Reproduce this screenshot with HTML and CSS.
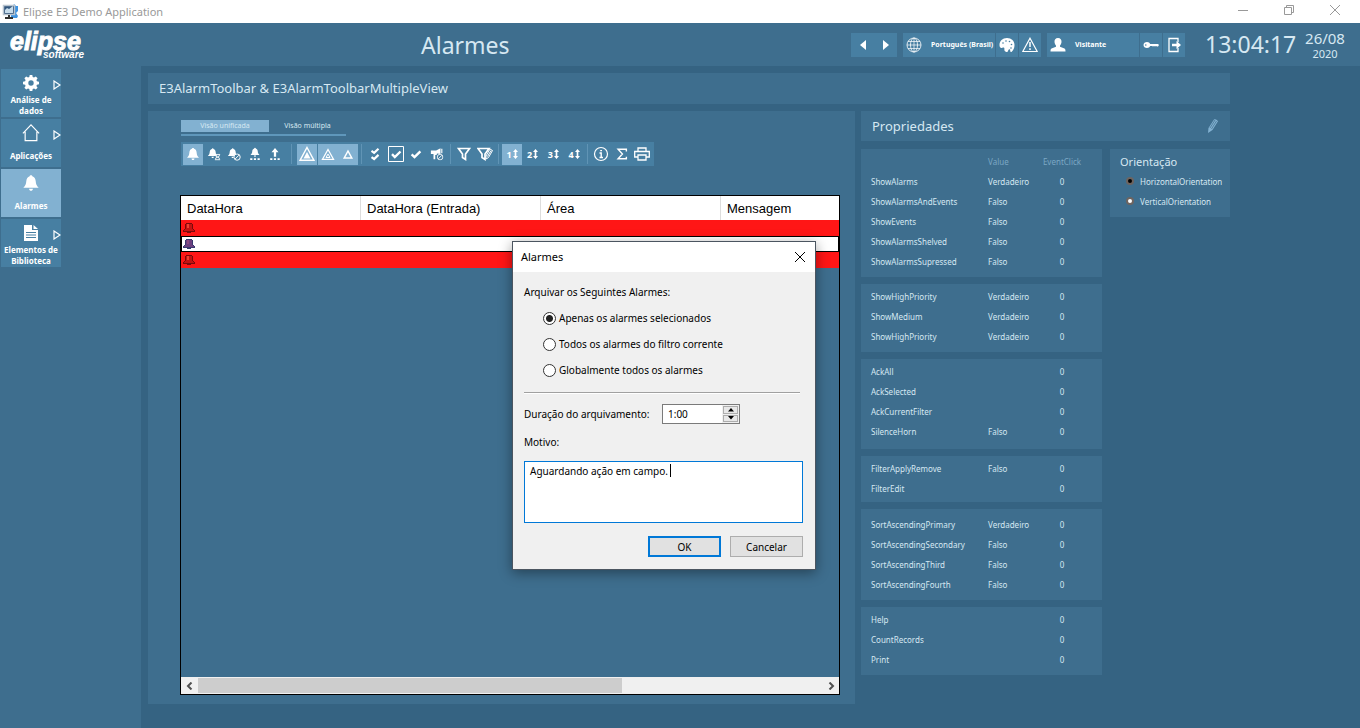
FILE: index.html
```html
<!DOCTYPE html>
<html lang="pt-BR">
<head>
<meta charset="utf-8">
<title>Elipse E3 Demo Application</title>
<link rel="stylesheet" href="styles.css">
</head>
<body>
<svg class="sprite" aria-hidden="true">
  <symbol id="bell" viewBox="0 0 16 16"><path d="M8 1c.8 0 1.200.5 1.200 1.100C11 2.700 12 4.200 12.200 6.500c.2 2.600.7 3.800 2.600 5.700H1.200C3.100 10.300 3.600 9.100 3.800 6.500 4 4.200 5 2.700 6.800 2.100 6.800 1.500 7.200 1 8 1zM6.300 13h3.400c-.1 1.200-.8 1.900-1.700 1.900s-1.600-.7-1.700-1.900z" fill="currentColor"/></symbol>
  <symbol id="alert" viewBox="0 0 16 16"><path d="M8 1.200 15.200 14.500H.8z" fill="none" stroke="currentColor" stroke-width="1.200"/><path d="M8 5v5M8 11.300v1.600" stroke="currentColor" stroke-width="1.500"/></symbol>
  <symbol id="check" viewBox="0 0 16 16"><path d="m3 8.500 3.300 3L13 5" fill="none" stroke="currentColor" stroke-width="2.800"/></symbol>
  <symbol id="ban" viewBox="0 0 8 8"><circle cx="4" cy="4" r="3.200" fill="#477fa2" stroke="currentColor"/><path d="m2 6 4-4" stroke="currentColor"/></symbol>
  <symbol id="sort" viewBox="0 0 6 12"><path d="M3 0 6 3.500H4v5h2L3 12 0 8.500h2v-5H0z" fill="currentColor"/></symbol>
  <symbol id="funnel" viewBox="0 0 16 16"><path d="M2.500 2.500h11L9.500 8v5.500l-3-2V8z" fill="none" stroke="currentColor" stroke-width="1.700"/></symbol>
  <symbol id="more" viewBox="0 0 8 10"><path d="M1 1v8l6-4z" fill="none" stroke="currentColor" stroke-width="1.200"/></symbol>
  <symbol id="rowbell" viewBox="0 0 12 12"><path d="M3 1h6v1h1v5h1v1h1v2H8v1H4v-1H0V8h1V7h1V2h1z" fill="var(--edge)"/><path d="M3 2h6v5h1v1h1v1H1V8h1V7h1z" fill="var(--body)"/><path d="M4 2h2v4H4z" fill="var(--shine)"/></symbol>
</svg>

<header class="titlebar">
  <svg class="app-icon" viewBox="0 0 17 17"><path d="M9 3h2l1-2 2 2h2v5l-2 2 2 3-1 2H9z" fill="#3f93e0"/><path d="M1.500 2.500h11v9h-11z" fill="#31557c" stroke="#b8c4cf" stroke-width="1.500"/><path d="M3 9V7l2-2 2 1 4-3v7H3z" fill="#c7dceb"/><path d="M6 12h2v2h3v2H3v-2h3z" fill="#303030"/></svg>
  <span class="app-name">Elipse E3 Demo Application</span>
  <div class="window-buttons">
    <button type="button" aria-label="Minimizar"><svg viewBox="0 0 12 12"><path d="M1 6.500h10"/></svg></button>
    <button type="button" aria-label="Restaurar"><svg viewBox="0 0 12 12"><path d="M1.500 3.500h7v7h-7zM3.500 3.500v-2h7v7h-2"/></svg></button>
    <button type="button" aria-label="Fechar"><svg viewBox="0 0 12 12"><path d="m1 1 10 10M11 1 1 11"/></svg></button>
  </div>
</header>

<div class="topbar">
  <svg class="logo" viewBox="0 0 76 30" role="img" aria-label="elipse software"><text x="0" y="20" class="logo-big">elipse</text><text x="33" y="28" class="logo-small">software</text></svg>
  <h1 class="screen-title">Alarmes</h1>
  <div class="tools">
    <div class="tool-group nav">
      <button class="tool" type="button" aria-label="Anterior"><svg viewBox="0 0 8 12"><path d="M7 1v10L1 6z" fill="currentColor"/></svg></button>
      <button class="tool" type="button" aria-label="Próximo"><svg viewBox="0 0 8 12"><path d="M1 1v10l6-5z" fill="currentColor"/></svg></button>
    </div>
    <div class="tool-group">
      <button class="tool wide" type="button"><svg viewBox="0 0 16 16" fill="none" stroke="currentColor" stroke-width=".8"><circle cx="8" cy="8" r="7"/><ellipse cx="8" cy="8" rx="3.500" ry="7"/><path d="M8 1v14M1 8h14M2 4.500h12M2 11.500h12" stroke-width=".7"/></svg><span>Português (Brasil)</span></button>
      <button class="tool" type="button" aria-label="Cores"><svg viewBox="0 0 16 16"><path d="M8 1c4.500 0 7.500 3 7.500 7 0 3-1.200 5.500-2.800 6.800-1 .6-1.700-.2-1.500-1.200.2-1.600-1.200-1.800-1.800-.7-.5 1-.7 2.300-2 2.100-1.500-.3-2.300-1.500-2-3 .2-1.500-1-1.700-2-1.300C1.500 11.500.5 10 .5 8 .5 4 3.500 1 8 1z" fill="currentColor"/><g fill="#477fa2"><circle cx="4" cy="6" r=".8"/><circle cx="7" cy="4" r=".8"/><circle cx="10.500" cy="4.500" r=".8"/><circle cx="12.500" cy="7.500" r=".8"/><circle cx="12" cy="11" r=".8"/></g></svg></button>
      <button class="tool" type="button" aria-label="Alertas"><svg viewBox="0 0 16 16"><use href="#alert"/></svg></button>
    </div>
    <div class="tool-group">
      <button class="tool wide user" type="button"><svg viewBox="0 0 16 16"><path d="M8 1c2.500 0 3.700 1.700 3.500 4-.2 1.700-.8 2.800-1.500 3.500v1.200l4.500 1.800c.8.400 1 1.500 1 3H.5c0-1.500.2-2.600 1-3L6 9.700V8.500C5.300 7.800 4.700 6.700 4.500 5 4.300 2.700 5.500 1 8 1z" fill="currentColor"/></svg><span>Visitante</span></button>
      <button class="tool" type="button" aria-label="Senha"><svg viewBox="0 0 16 16"><path d="M4 5c1.700 0 2.600.8 3.200 2H15l1 1-1 1.500h-1L13 9l-1 .5L11 9l-1 .5L9 9H7.200C6.600 10.200 5.700 11 4 11 2 11 .5 9.800.5 8S2 5 4 5z" fill="currentColor"/><circle cx="2.800" cy="8" r=".8" fill="#477fa2"/></svg></button>
      <button class="tool" type="button" aria-label="Sair"><svg viewBox="0 0 16 16"><path d="M12 5V1.500H3v13h9V11" fill="none" stroke="currentColor" stroke-width="1.300"/><path d="M6 6.700h4.500V4L15 8l-4.500 4V9.300H6z" fill="currentColor"/></svg></button>
    </div>
  </div>
  <time class="clock">13:04:17</time>
  <div class="date"><span>26/08</span><span class="year">2020</span></div>
</div>

<div class="workspace">
  <nav class="sidebar">
    <button class="side-item" type="button"><svg class="side-icon" viewBox="0 0 18 18"><path d="M7.700 1h2.600l.4 2.100 1.300.5L13.800 2.400l1.800 1.800L14.400 6l.5 1.300 2.100.4v2.600l-2.100.4-.5 1.300 1.200 1.800-1.800 1.800-1.800-1.200-1.300.5-.4 2.100H7.700l-.4-2.100-1.300-.5-1.800 1.200-1.800-1.800L3.600 12l-.5-1.300L1 10.300V7.700l2.100-.4L3.600 6 2.400 4.200l1.800-1.800L6 3.600l1.300-.5zM9 6.300a2.700 2.700 0 1 0 0 5.400 2.700 2.700 0 0 0 0-5.400z" fill="currentColor" fill-rule="evenodd"/></svg><span class="side-label">Análise de dados</span><svg class="more" viewBox="0 0 8 10"><use href="#more"/></svg></button>
    <button class="side-item" type="button"><svg class="side-icon house" viewBox="0 0 20 20"><path d="M1 10.500 10 1l9 9.500M3.500 8.500v10h13v-10" fill="none" stroke="currentColor" stroke-width="1.300"/></svg><span class="side-label">Aplicações</span><svg class="more" viewBox="0 0 8 10"><use href="#more"/></svg></button>
    <button class="side-item active" type="button"><svg class="side-icon" viewBox="0 0 16 16"><use href="#bell"/></svg><span class="side-label">Alarmes</span></button>
    <button class="side-item" type="button"><svg class="side-icon" viewBox="0 0 18 18"><path d="M2 1h8v5h6v11H2zM11.500 1 16 5h-4.500z" fill="currentColor"/><path d="M4 8.500h10M4 11h10M4 13.500h10" stroke="#477fa2"/></svg><span class="side-label">Elementos de Biblioteca</span><svg class="more" viewBox="0 0 8 10"><use href="#more"/></svg></button>
  </nav>

  <main class="content">
    <h2 class="panel page-heading">E3AlarmToolbar &amp; E3AlarmToolbarMultipleView</h2>

    <section class="panel alarm-panel">
      <div class="tabs" role="tablist">
        <button class="tab active" type="button" role="tab" aria-selected="true">Visão unificada</button>
        <button class="tab" type="button" role="tab" aria-selected="false">Visão múltipla</button>
      </div>
      <div class="toolbar" role="toolbar">
        <div class="group g5">
          <button class="tb on" type="button" aria-label="Alarmes"><svg viewBox="0 0 16 16"><use href="#bell"/></svg></button>
          <button class="tb" type="button" aria-label="Alarmes e eventos"><svg viewBox="0 0 16 16"><use href="#bell" x="0" y="0" width="13" height="14"/><path d="M9 8.500h6M9 14.500h6M10 9v1.500l4 2V14M14 9v1.500l-4 2V14" fill="#477fa2" stroke="currentColor"/></svg></button>
          <button class="tb" type="button" aria-label="Arquivados"><svg viewBox="0 0 16 16"><use href="#bell" width="13" height="14"/><use href="#ban" x="7" y="7" width="9" height="9"/></svg></button>
          <button class="tb" type="button" aria-label="Suprimidos"><svg viewBox="0 0 16 16"><use href="#bell" x="2" y="0" width="12" height="12"/><path d="M2.500 13.800h11" stroke="currentColor" stroke-width="2" stroke-dasharray="2.500 1.700"/></svg></button>
          <button class="tb" type="button" aria-label="Eventos"><svg viewBox="0 0 16 16"><path d="m8 1 4 5H9.300v5H6.700V6H4z" fill="currentColor"/><path d="M2.500 13.800h11" stroke="currentColor" stroke-width="2" stroke-dasharray="2.500 1.700"/></svg></button>
        </div>
        <span class="sep"></span>
        <div class="group g3">
          <button class="tb on" type="button" aria-label="Prioridade alta"><svg class="full" viewBox="0 0 16 16"><path d="M8 1.500 15 14.300H1z" fill="none" stroke="currentColor" stroke-width="1.400"/><path d="M8 6 11.500 12.500h-7z" fill="currentColor"/></svg></button>
          <button class="tb on" type="button" aria-label="Prioridade média"><svg class="full" viewBox="0 0 16 16"><path d="M8 3.500 13.500 13.300h-11z" fill="none" stroke="currentColor" stroke-width="1.300"/><path d="M8 8 10 11.500H6z" fill="none" stroke="currentColor"/></svg></button>
          <button class="tb on" type="button" aria-label="Prioridade baixa"><svg class="full" viewBox="0 0 16 16"><path d="M8 5 11.800 12H4.200z" fill="none" stroke="currentColor" stroke-width="1.500"/></svg></button>
        </div>
        <span class="sep tight"></span>
        <div class="group g4">
          <button class="tb" type="button" aria-label="Reconhecer todos"><svg viewBox="0 0 16 16"><path d="m4 4.500 3 2.200 5-4.700M4 11.500l3 2.200L12 9" fill="none" stroke="currentColor" stroke-width="2.500"/></svg></button>
          <button class="tb" type="button" aria-label="Reconhecer selecionado"><svg class="full" viewBox="0 0 16 16"><path d="M.5.500h15v15H.5z" fill="none" stroke="currentColor"/><path d="M4 8.200 6.800 11 12.500 5.500" fill="none" stroke="currentColor" stroke-width="2.400"/></svg></button>
          <button class="tb" type="button" aria-label="Reconhecer filtro"><svg viewBox="0 0 16 16"><use href="#check"/></svg></button>
          <button class="tb" type="button" aria-label="Silenciar"><svg viewBox="0 0 16 16"><path d="M1 4h6l5-2.500V8L8 7.500 7.500 9H6v5H4V8H1z" fill="currentColor"/><path d="M13.500 2v5" stroke="currentColor" stroke-width="1.300"/><use href="#ban" x="7.500" y="7.500" width="8" height="8"/></svg></button>
        </div>
        <span class="sep tight"></span>
        <div class="group g2">
          <button class="tb" type="button" aria-label="Filtro"><svg class="full" viewBox="0 0 16 16"><use href="#funnel"/></svg></button>
          <button class="tb" type="button" aria-label="Editar filtro"><svg class="full" viewBox="0 0 16 16"><use href="#funnel" x="-1.500" width="16" height="16"/><path d="m9 10 4-7 2.500 1.500-4 7L9 13z" fill="#477fa2" stroke="currentColor"/><path d="m10.500 10.500 3.500-6" stroke="currentColor"/></svg></button>
        </div>
        <span class="sep tight"></span>
        <div class="group g4">
          <button class="tb num on" type="button"><span>1</span><svg viewBox="0 0 6 12"><use href="#sort"/></svg></button>
          <button class="tb num" type="button"><span>2</span><svg viewBox="0 0 6 12"><use href="#sort"/></svg></button>
          <button class="tb num" type="button"><span>3</span><svg viewBox="0 0 6 12"><use href="#sort"/></svg></button>
          <button class="tb num" type="button"><span>4</span><svg viewBox="0 0 6 12"><use href="#sort"/></svg></button>
        </div>
        <span class="sep tight"></span>
        <div class="group g3">
          <button class="tb" type="button" aria-label="Ajuda"><svg class="full" viewBox="0 0 16 16"><circle cx="8" cy="8" r="6.500" fill="none" stroke="currentColor" stroke-width="1.200"/><path d="M6.500 7H8.200v4.500M6.500 11.500h3.500M7.200 4.600h1.800" fill="none" stroke="currentColor" stroke-width="1.400"/></svg></button>
          <button class="tb" type="button" aria-label="Contar registros"><svg viewBox="0 0 16 16"><path d="M13 5V2.500H3.500L8.500 8l-5 5.500H13V11" fill="none" stroke="currentColor" stroke-width="1.600"/></svg></button>
          <button class="tb" type="button" aria-label="Imprimir"><svg class="full" viewBox="0 0 16 16"><path d="M4 5V2h8v3M4 11H.7V5.500h14.600V11H12M4 9h8v5H4z" fill="none" stroke="currentColor" stroke-width="1.300"/></svg></button>
        </div>
      </div>

      <div class="alarm-grid">
        <table class="alarm-table">
          <thead><tr><th>DataHora</th><th>DataHora (Entrada)</th><th>Área</th><th class="last">Mensagem</th></tr></thead>
          <tbody>
            <tr class="critical"><td colspan="4"><svg class="row-bell" viewBox="0 0 12 12"><use href="#rowbell"/></svg></td></tr>
            <tr class="selected"><td colspan="4"><svg class="row-bell" viewBox="0 0 12 12"><use href="#rowbell"/></svg></td></tr>
            <tr class="critical"><td colspan="4"><svg class="row-bell" viewBox="0 0 12 12"><use href="#rowbell"/></svg></td></tr>
          </tbody>
        </table>
        <div class="hscroll">
          <button type="button" aria-label="Rolar à esquerda"><svg viewBox="0 0 8 8"><path d="M5.500.5 2 4l3.500 3.500"/></svg></button>
          <div class="track"><div class="thumb"></div></div>
          <button type="button" aria-label="Rolar à direita"><svg viewBox="0 0 8 8"><path d="M2.500.5 6 4 2.500 7.500"/></svg></button>
        </div>
      </div>
    </section>

    <aside class="side">
      <div class="panel props-heading"><h2>Propriedades</h2><button type="button" aria-label="Editar"><svg viewBox="0 0 12 16"><path d="m1 15 .5-5L7 1.500c1-1 4 .5 3.800 2L5.500 12z" fill="#82b1d1"/><path d="m3 10 5-8M4.500 11l5-8" stroke="#3e6e8e" stroke-width=".7"/></svg></button></div>
      <div class="side-columns">
        <div class="props">
          <div class="panel prop-box"><table>
            <tr class="head"><th></th><th>Value</th><th class="n">EventClick</th></tr>
            <tr><td>ShowAlarms</td><td>Verdadeiro</td><td class="n">0</td></tr>
            <tr><td>ShowAlarmsAndEvents</td><td>Falso</td><td class="n">0</td></tr>
            <tr><td>ShowEvents</td><td>Falso</td><td class="n">0</td></tr>
            <tr><td>ShowAlarmsShelved</td><td>Falso</td><td class="n">0</td></tr>
            <tr><td>ShowAlarmsSupressed</td><td>Falso</td><td class="n">0</td></tr>
          </table></div>
          <div class="panel prop-box"><table>
            <tr><td>ShowHighPriority</td><td>Verdadeiro</td><td class="n">0</td></tr>
            <tr><td>ShowMedium</td><td>Verdadeiro</td><td class="n">0</td></tr>
            <tr><td>ShowHighPriority</td><td>Verdadeiro</td><td class="n">0</td></tr>
          </table></div>
          <div class="panel prop-box roomy"><table>
            <tr><td>AckAll</td><td></td><td class="n">0</td></tr>
            <tr><td>AckSelected</td><td></td><td class="n">0</td></tr>
            <tr><td>AckCurrentFilter</td><td></td><td class="n">0</td></tr>
            <tr><td>SilenceHorn</td><td>Falso</td><td class="n">0</td></tr>
          </table></div>
          <div class="panel prop-box snug"><table>
            <tr><td>FilterApplyRemove</td><td>Falso</td><td class="n">0</td></tr>
            <tr><td>FilterEdit</td><td></td><td class="n">0</td></tr>
          </table></div>
          <div class="panel prop-box low"><table>
            <tr><td>SortAscendingPrimary</td><td>Verdadeiro</td><td class="n">0</td></tr>
            <tr><td>SortAscendingSecondary</td><td>Falso</td><td class="n">0</td></tr>
            <tr><td>SortAscendingThird</td><td>Falso</td><td class="n">0</td></tr>
            <tr><td>SortAscendingFourth</td><td>Falso</td><td class="n">0</td></tr>
          </table></div>
          <div class="panel prop-box"><table>
            <tr><td>Help</td><td></td><td class="n">0</td></tr>
            <tr><td>CountRecords</td><td></td><td class="n">0</td></tr>
            <tr><td>Print</td><td></td><td class="n">0</td></tr>
          </table></div>
        </div>
        <fieldset class="panel orientation">
          <legend>Orientação</legend>
          <label><input type="radio" name="orientation" checked>HorizontalOrientation</label>
          <label><input type="radio" name="orientation">VerticalOrientation</label>
        </fieldset>
      </div>
    </aside>
  </main>
</div>

<form class="dialog" role="dialog" aria-labelledby="dlg-title">
  <div class="dialog-bar"><span id="dlg-title">Alarmes</span><button type="button" aria-label="Fechar"><svg viewBox="0 0 12 12"><path d="m1 1 10 10M11 1 1 11"/></svg></button></div>
  <div class="dialog-body">
    <p class="question">Arquivar os Seguintes Alarmes:</p>
    <div class="choices">
      <label><input type="radio" name="scope" checked>Apenas os alarmes selecionados</label>
      <label><input type="radio" name="scope">Todos os alarmes do filtro corrente</label>
      <label><input type="radio" name="scope">Globalmente todos os alarmes</label>
    </div>
    <hr>
    <div class="duration">
      <label for="duration">Duração do arquivamento:</label>
      <div class="spin">
        <input id="duration" type="text" value="1:00">
        <div class="spin-buttons">
          <button type="button" aria-label="Aumentar"><svg viewBox="0 0 6 4"><path d="M3 0 6 3.500H0z"/></svg></button>
          <button type="button" aria-label="Diminuir"><svg viewBox="0 0 6 4"><path d="M0 0h6L3 3.500z"/></svg></button>
        </div>
      </div>
    </div>
    <label class="reason-label" for="reason">Motivo:</label>
    <div class="reason-box">
      <textarea id="reason" class="reason">Aguardando ação em campo.</textarea>
      <span class="caret"></span>
    </div>
    <div class="actions"><button class="primary" type="button">OK</button><button type="button">Cancelar</button></div>
  </div>
</form>
</body>
</html>
```

FILE: styles.css
```css
:root {
  --base: #3e6e8e;
  --dark: #356382;
  --button: #477fa2;
  --active: #82b1d1;
  --text: #d6e8f2;
}

* { box-sizing: border-box; }

body {
  margin: 0;
  min-height: 100vh;
  display: flex;
  flex-direction: column;
  position: relative;
  background: var(--base);
  color: var(--text);
  font-family: "Noto Sans", "Open Sans", sans-serif;
  font-size: 8px;
}

button {
  margin: 0;
  padding: 0;
  border: 0;
  background: none;
  color: inherit;
  font: inherit;
}

h1, h2, p { margin: 0; font-weight: 400; }
svg { display: block; }
.sprite { position: absolute; width: 0; height: 0; }

/* Window title bar */
.titlebar {
  height: 23px;
  padding-left: 2px;
  display: flex;
  align-items: center;
  background: #fff;
  color: #999;
}
.app-icon { width: 17px; height: 17px; margin-right: 4px; }
.app-name { flex: 1; font-size: 11px; }
.window-buttons { display: flex; align-self: flex-start; padding-right: 2px; }
.window-buttons button {
  width: 46px;
  height: 20px;
  display: grid;
  place-items: center;
}
.window-buttons svg { width: 12px; height: 12px; fill: none; stroke: #999; }

/* Application header */
.topbar {
  height: 43px;
  padding: 0 13px 0 10px;
  display: flex;
  align-items: center;
}
.logo { width: 76px; height: 30px; overflow: visible; }
.logo text {
  font-family: "Liberation Sans", sans-serif;
  font-weight: 700;
  font-style: italic;
  fill: #fff;
  stroke: #fff;
}
.logo .logo-big { font-size: 25px; stroke-width: 1px; }
.logo .logo-small { font-size: 10px; stroke-width: 0; }
.screen-title { flex: 1; padding-left: 335px; font-size: 23px; }
.tools { display: flex; gap: 6px; }
.tool-group { display: flex; gap: 1px; }
.tool-group.nav { gap: 0; }
.tool {
  width: 22px;
  height: 24px;
  display: flex;
  align-items: center;
  justify-content: center;
  background: var(--button);
  color: #fff;
  font-weight: 700;
  font-size: 7px;
}
.nav .tool { width: 23px; }
.tool svg { width: 16px; height: 16px; flex: none; }
.nav .tool svg { width: 8px; height: 12px; }
.tool.wide { width: 92px; padding-left: 3px; justify-content: flex-start; gap: 9px; white-space: nowrap; }
.clock { margin-left: 20px; width: 98px; font-size: 23px; line-height: 43px; }
.date {
  width: 44px;
  display: flex;
  flex-direction: column;
  align-items: center;
  font-size: 15px;
  line-height: 18px;
}
.date .year { font-size: 11px; line-height: 14px; }

/* Sidebar */
.workspace { flex: 1; display: flex; }
.sidebar {
  width: 141px;
  padding: 3px 0 0 1px;
  display: flex;
  flex-direction: column;
  gap: 2px;
  flex: none;
}
.side-item {
  position: relative;
  width: 60px;
  height: 48px;
  display: flex;
  flex-direction: column;
  align-items: center;
  background: var(--button);
  color: #fff;
  font-weight: 700;
  line-height: 11px;
}
.side-item.active { background: var(--active); }
.side-icon { width: 18px; height: 18px; margin: 5px 0 2px; flex: none; }
.side-icon.house { width: 20px; }
.side-label { height: 22px; display: flex; align-items: center; text-align: center; }
.side-item .more { position: absolute; right: 0; top: 11px; width: 8px; height: 10px; }

/* Content */
.content {
  flex: 1;
  min-width: 0;
  padding: 7px 130px 24px 7px;
  display: grid;
  grid-template-columns: minmax(0, 1fr) 369px;
  grid-template-rows: auto 1fr;
  gap: 7px 6px;
  background: var(--dark);
}
.panel { background: var(--base); }
.page-heading {
  grid-column: 1 / -1;
  padding-left: 11px;
  font-size: 13px;
  line-height: 31px;
}
.alarm-panel {
  padding: 9px 15px 9px 32px;
  display: flex;
  flex-direction: column;
}
.tabs {
  align-self: flex-start;
  width: 165px;
  margin: 0 0 6px 1px;
  padding-bottom: 2px;
  display: flex;
  border-bottom: 2px solid #5f97bb;
}
.tab { flex: 1; height: 12px; font-size: 7px; line-height: 12px; }
.tab.active { flex: none; width: 88px; background: var(--active); }

.toolbar {
  align-self: flex-start;
  height: 24px;
  margin-left: 1px;
  padding: 0 2px;
  display: flex;
  align-items: center;
  background: var(--button);
  color: #fff;
}
.group { display: flex; justify-content: space-between; }
.g2 { width: 41px; }
.g3 { width: 61px; }
.g4 { width: 82px; }
.g5 { width: 102px; }
.tb {
  width: 20px;
  height: 21px;
  display: flex;
  align-items: center;
  justify-content: center;
}
.tb.on { background: var(--active); }
.tb svg { width: 14px; height: 14px; }
.tb svg.full { width: 16px; height: 16px; }
.tb.num { gap: 1px; font-size: 9px; font-weight: 700; }
.tb.num svg { width: 5px; height: 10px; }
.sep { width: 1px; height: 20px; margin: 0 5px 0 6px; background: #6094b5; }
.sep.tight { margin: 0 3px; }

.alarm-grid {
  flex: 1;
  margin-top: 29px;
  display: flex;
  flex-direction: column;
  justify-content: space-between;
  border: 1px solid #000;
  overflow: hidden;
}
.alarm-table {
  width: 100%;
  border-collapse: separate;
  border-spacing: 0;
  table-layout: fixed;
  color: #000;
}
.alarm-table th {
  width: 180px;
  height: 24px;
  padding: 0 6px;
  background: #fff;
  border-right: 1px solid #ddd;
  font: 400 13px "Liberation Sans", sans-serif;
  text-align: left;
}
.alarm-table th.last { width: auto; border-right: 0; }
.alarm-table td { height: 16px; padding: 0 2px; }
.row-bell { width: 12px; height: 12px; }
.critical { background: #ff1616; --edge: #7a0a0a; --body: #c41212; --shine: #f04030; }
.selected { background: #fff; outline: 1px solid #000; outline-offset: -1px; --edge: #38386e; --body: #6b4080; --shine: #8b4a80; }

.hscroll {
  height: 17px;
  display: flex;
  background: #f0f0f0;
}
.hscroll button { width: 17px; display: grid; place-items: center; }
.hscroll svg { width: 8px; height: 8px; fill: none; stroke: #505050; stroke-width: 2; }
.track { flex: 1; padding: 1px 0; }
.thumb { width: 68%; height: 100%; background: #cdcdcd; }

/* Properties column */
.side { display: flex; flex-direction: column; gap: 8px; }
.props-heading {
  height: 30px;
  padding: 0 11px;
  display: flex;
  align-items: center;
  justify-content: space-between;
}
.props-heading h2 { font-size: 13px; }
.props-heading svg { width: 12px; height: 16px; }
.side-columns { display: grid; grid-template-columns: 241px 120px; gap: 8px; align-items: start; }
.props { display: flex; flex-direction: column; gap: 7px; }
.prop-box { padding: 2px 0 6px 10px; }
.prop-box.roomy { padding-bottom: 8px; }
.prop-box.snug { padding-bottom: 4px; }
.prop-box.low { padding-top: 5px; }
.prop-box table { width: 211px; border-collapse: collapse; table-layout: fixed; }
.prop-box td, .prop-box th { height: 20px; padding: 0; text-align: left; font-weight: 400; }
.prop-box td:nth-child(2), .prop-box th:nth-child(2) { width: 54px; }
.prop-box .n { width: 40px; text-align: center; }
.prop-box .head { color: #7ba7c4; }

.orientation {
  margin: 0;
  min-width: 0;
  border: 0;
  padding: 4px 0 6px 10px;
  display: flex;
  flex-direction: column;
}
.orientation legend { float: left; padding: 0; font-size: 11px; line-height: 18px; }
.orientation label { display: flex; align-items: center; height: 20px; padding-left: 6px; gap: 6px; }
.orientation input {
  appearance: none;
  width: 8px;
  height: 8px;
  margin: 0;
  border: 2px solid #6d6460;
  border-radius: 50%;
  background: #fff;
}
.orientation input:checked { background: #000; }

/* Archive dialog */
.dialog {
  position: absolute;
  left: 512px;
  top: 241px;
  width: 304px;
  border: 1px solid #4b5560;
  background: #f0f0f0;
  color: #000;
  box-shadow: 0 3px 12px rgba(0, 0, 0, .4);
  font-size: 10px;
}
.dialog-bar {
  height: 30px;
  padding: 0 9px 1px 8px;
  display: flex;
  align-items: center;
  justify-content: space-between;
  background: #fff;
  font-size: 11px;
}
.dialog-bar svg { width: 12px; height: 12px; fill: none; stroke: #000; }
.dialog-body { padding: 7px 12px 12px 11px; }
.question { line-height: 26px; }
.choices { padding-left: 19px; }
.choices label { height: 26px; display: flex; align-items: center; gap: 3px; }
.choices input {
  appearance: none;
  width: 13px;
  height: 13px;
  margin: 0;
  border: 1px solid #333;
  border-radius: 50%;
  background: #fff;
}
.choices input:checked { background: radial-gradient(circle, #222 3px, #fff 4px); }
.dialog hr {
  height: 2px;
  margin: 9px 3px 10px 0;
  border: 0;
  border-top: 1px solid #a0a0a0;
  background: #fff;
}
.duration { display: flex; align-items: center; }
.duration label { flex: none; width: 138px; white-space: nowrap; }
.spin {
  width: 78px;
  height: 20px;
  display: flex;
  border: 1px solid #7a7a7a;
  background: #fff;
}
.spin input { flex: 1; min-width: 0; padding: 0 5px; border: 0; background: none; font: inherit; color: #000; }
.spin-buttons { width: 17px; padding: 1px; display: flex; flex-direction: column; gap: 1px; background: #f0f0f0; }
.spin-buttons button { flex: 1; display: grid; place-items: center; border: 1px solid #adadad; background: #e8e8e8; }
.spin-buttons svg { width: 6px; height: 4px; }
.reason-label { display: block; margin: 8px 0 9px; line-height: 20px; }
.reason-box { position: relative; }
.reason {
  display: block;
  width: 100%;
  height: 62px;
  padding: 1px 5px;
  border: 1px solid #0078d7;
  outline: 0;
  resize: none;
  background: #fff;
  color: #000;
  font: inherit;
  line-height: 17px;
}
.caret { position: absolute; left: 146px; top: 3px; width: 1px; height: 13px; background: #000; }
.actions { margin-top: 13px; display: flex; justify-content: flex-end; gap: 9px; }
.actions button { width: 73px; height: 21px; border: 1px solid #adadad; background: #e1e1e1; }
.actions .primary { border: 2px solid #0078d7; }
```
